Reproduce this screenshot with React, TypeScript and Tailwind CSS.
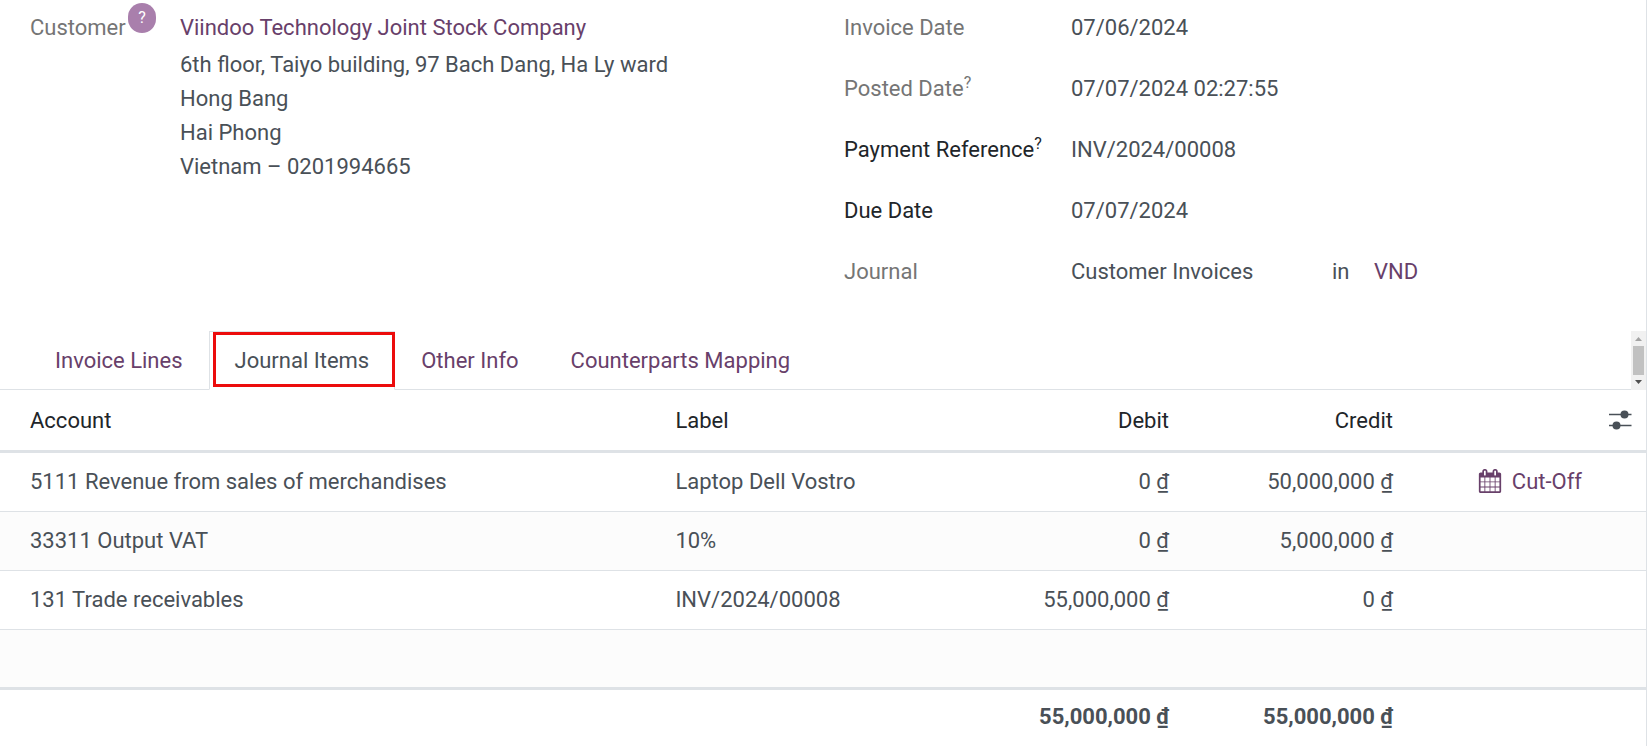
import React, { useState } from "react";
import clsx from "clsx";

const tabs = [
  "Invoice Lines",
  "Journal Items",
  "Other Info",
  "Counterparts Mapping",
];

const address = [
  "6th floor, Taiyo building, 97 Bach Dang, Ha Ly ward",
  "Hong Bang",
  "Hai Phong",
  "Vietnam – 0201994665",
];

const fields = [
  { label: "Invoice Date", value: "07/06/2024", muted: true, help: false },
  { label: "Posted Date", value: "07/07/2024 02:27:55", muted: true, help: true },
  { label: "Payment Reference", value: "INV/2024/00008", muted: false, help: true },
  { label: "Due Date", value: "07/07/2024", muted: false, help: false },
];

const lines = [
  {
    account: "5111 Revenue from sales of merchandises",
    label: "Laptop Dell Vostro",
    debit: "0 ₫",
    credit: "50,000,000 ₫",
    cutOff: true,
  },
  {
    account: "33311 Output VAT",
    label: "10%",
    debit: "0 ₫",
    credit: "5,000,000 ₫",
    cutOff: false,
  },
  {
    account: "131 Trade receivables",
    label: "INV/2024/00008",
    debit: "55,000,000 ₫",
    credit: "0 ₫",
    cutOff: false,
  },
];

const CalendarIcon = () => (
  <svg viewBox="0 0 1792 1792" className="size-6 fill-current" aria-hidden="true">
    <path d="M192 1664h288v-288h-288v288zm352 0h320v-288h-320v288zm-352-352h288v-320h-288v320zm352 0h320v-320h-320v320zm-352-384h288v-288h-288v288zm736 736h320v-288h-320v288zm-384-736h320v-288h-320v288zm768 736h288v-288h-288v288zm-384-352h320v-320h-320v320zm-352-864v-288q0-13-9.5-22.5t-22.5-9.5h-64q-13 0-22.5 9.5t-9.5 22.5v288q0 13 9.5 22.5t22.5 9.5h64q13 0 22.5-9.5t9.5-22.5zm736 864h288v-320h-288v320zm-384-384h320v-288h-320v288zm384 0h288v-288h-288v288zm32-480v-288q0-13-9.5-22.5t-22.5-9.5h-64q-13 0-22.5 9.5t-9.5 22.5v288q0 13 9.5 22.5t22.5 9.5h64q13 0 22.5-9.5t9.5-22.5zm384-64v1280q0 52-38 90t-90 38h-1408q-52 0-90-38t-38-90v-1280q0-52 38-90t90-38h128v-96q0-66 47-113t113-47h64q66 0 113 47t47 113v96h384v-96q0-66 47-113t113-47h64q66 0 113 47t47 113v96h128q52 0 90 38t38 90z" />
  </svg>
);

const SlidersIcon = () => (
  <svg viewBox="0 0 24 20" className="h-5 w-6" aria-hidden="true">
    <path d="M1 4.5h22.5M1 15.5h22.5" stroke="#495057" strokeWidth="1.6" />
    <circle cx="16.5" cy="4.5" r="4" fill="#495057" />
    <circle cx="8.5" cy="15.5" r="4" fill="#495057" />
  </svg>
);

const ScrollBar = () => (
  <div className="flex w-[15px] flex-col items-center bg-[#f1f1f1]">
    <svg viewBox="0 0 15 15" className="size-[15px]" aria-hidden="true">
      <path d="M4 10h7L7.5 6z" fill="#a3a3a3" />
    </svg>
    <div className="w-[11px] flex-1 bg-[#c1c1c1]" />
    <svg viewBox="0 0 15 15" className="size-[15px]" aria-hidden="true">
      <path d="M4 5h7L7.5 9z" fill="#505050" />
    </svg>
  </div>
);

const App = () => {
  const [activeTab, setActiveTab] = useState("Journal Items");

  return (
    <div className="min-h-screen border-r border-[#dee2e6] bg-white font-['Roboto','Noto_Sans',sans-serif] text-[22px] leading-[33px] text-[#495057]">
      <div className="flex pt-[11px] pb-[43px] pl-[30px]">
        <div className="flex w-[50%] shrink-0">
          <div className="relative w-[150px] shrink-0 text-[#757575]">
            Customer
            <button
              aria-label="Help"
              className="absolute -top-2 left-[98px] h-[30px] w-7 rounded-full bg-[#a97fac] text-base text-white"
            >
              ?
            </button>
          </div>
          <div>
            <a href="#partner" className="block text-[#68406a]">
              Viindoo Technology Joint Stock Company
            </a>
            <address className="pt-1 leading-[34px] not-italic">
              {address.map((line) => (
                <div key={line}>{line}</div>
              ))}
            </address>
          </div>
        </div>

        <dl className="flex flex-1 flex-col gap-7 pl-[6px]">
          {fields.map((field) => (
            <div key={field.label} className="flex">
              <dt
                className={clsx(
                  "w-[227px] shrink-0",
                  field.muted ? "text-[#757575]" : "text-[#212529]"
                )}
              >
                {field.label}
                {field.help && <sup className="-top-2 text-base leading-none">?</sup>}
              </dt>
              <dd>{field.value}</dd>
            </div>
          ))}
          <div className="flex">
            <dt className="w-[227px] shrink-0 text-[#757575]">Journal</dt>
            <dd className="flex">
              <span className="w-[261px]">Customer Invoices</span>
              <span className="w-[42px]">in</span>
              <a href="#currency" className="text-[#68406a]">
                VND
              </a>
            </dd>
          </div>
        </dl>
      </div>

      <div className="flex">
        <div role="tablist" className="flex flex-1 border-b border-[#dee2e6] pl-[29px]">
          {tabs.map((tab) => (
            <button
              key={tab}
              role="tab"
              aria-selected={activeTab == tab}
              onClick={() => setActiveTab(tab)}
              className={clsx(
                "relative -mb-px h-[59px] border px-[25px]",
                activeTab == tab
                  ? "border-[#dee2e6] border-b-white bg-white text-[#495057]"
                  : "border-transparent text-[#68406a]"
              )}
            >
              {tab}
              {tab == "Journal Items" && (
                <span className="absolute top-0 -right-px bottom-[2px] left-[3px] border-[3px] border-[#ec0c0c]" />
              )}
            </button>
          ))}
        </div>
        <ScrollBar />
      </div>

      <table className="w-full table-fixed border-separate border-spacing-0">
        <colgroup>
          <col className="w-[40%]" />
          <col />
          <col className="w-[224px]" />
          <col className="w-[224px]" />
          <col className="w-[189px]" />
          <col className="w-[46px]" />
        </colgroup>
        <thead>
          <tr className="h-[63px] text-left text-[#212529] *:border-b-3 *:border-[#dee2e6] *:font-normal">
            <th className="pl-[30px]">Account</th>
            <th className="pl-[17px]">Label</th>
            <th className="pr-[18px] text-right">Debit</th>
            <th className="pr-[18px] text-right">Credit</th>
            <th></th>
            <th className="pr-[14px]">
              <button aria-label="Optional columns" className="float-right">
                <SlidersIcon />
              </button>
            </th>
          </tr>
        </thead>
        <tbody>
          {lines.map((line) => (
            <tr
              key={line.account}
              className="h-[59px] *:border-b *:border-[#dee2e6] *:pb-[2px] even:bg-[#fcfcfc]"
            >
              <td className="pl-[30px]">{line.account}</td>
              <td className="pl-[17px]">{line.label}</td>
              <td className="pr-[18px] text-right">{line.debit}</td>
              <td className="pr-[18px] text-right">{line.credit}</td>
              <td className="pr-[18px]">
                {line.cutOff && (
                  <button className="ml-auto flex items-center gap-[10px] text-[#68406a]">
                    <CalendarIcon />
                    Cut-Off
                  </button>
                )}
              </td>
              <td></td>
            </tr>
          ))}
          <tr className="h-[60px] bg-[#fcfcfc]">
            <td colSpan={6} className="border-b-3 border-[#dee2e6]"></td>
          </tr>
        </tbody>
        <tfoot>
          <tr className="h-[52px] font-bold">
            <td></td>
            <td></td>
            <td className="pr-[18px] text-right">55,000,000 ₫</td>
            <td className="pr-[18px] text-right">55,000,000 ₫</td>
            <td></td>
            <td></td>
          </tr>
        </tfoot>
      </table>
    </div>
  );
};

export default App;
